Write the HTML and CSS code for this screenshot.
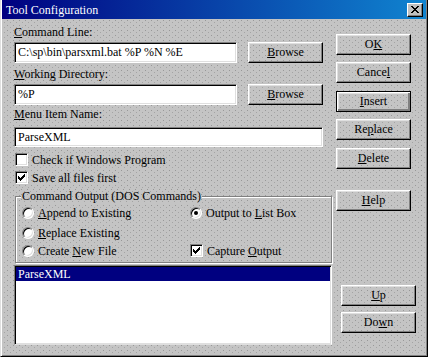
FILE: index.html
```html
<!DOCTYPE html>
<html>
<head>
<meta charset="utf-8">
<title>Tool Configuration</title>
<link rel="stylesheet" href="styles.css">
</head>
<body>
<div class="window dots">
  <div class="titlebar">
    <span class="title">Tool Configuration</span>
    <span class="close">
      <svg width="8" height="7" viewBox="0 0 8 7" shape-rendering="crispEdges">
        <rect x="0" y="0" width="2" height="1"/><rect x="6" y="0" width="2" height="1"/>
        <rect x="1" y="1" width="2" height="1"/><rect x="5" y="1" width="2" height="1"/>
        <rect x="2" y="2" width="4" height="1"/>
        <rect x="3" y="3" width="2" height="1"/>
        <rect x="2" y="4" width="4" height="1"/>
        <rect x="1" y="5" width="2" height="1"/><rect x="5" y="5" width="2" height="1"/>
        <rect x="0" y="6" width="2" height="1"/><rect x="6" y="6" width="2" height="1"/>
      </svg>
    </span>
  </div>
  <div class="body">
    <div class="left">
      <div class="lbl lbl-cmd"><u>C</u>ommand Line:</div>
      <div class="row row-cmd">
        <div class="field field-short">C:\sp\bin\parsxml.bat %P %N %E</div>
        <div class="btn"><span><u>B</u>rowse</span></div>
      </div>
      <div class="lbl lbl-dir"><u>W</u>orking Directory:</div>
      <div class="row row-dir">
        <div class="field field-short">%P</div>
        <div class="btn"><span><u>B</u>rowse</span></div>
      </div>
      <div class="lbl lbl-menu"><u>M</u>enu Item Name:</div>
      <div class="field field-long">ParseXML</div>
      <div class="check check-1">
        <span class="box"></span><span>Check if Windows Program</span>
      </div>
      <div class="check check-2">
        <span class="box"><svg class="tick" width="7" height="7" viewBox="0 0 7 7" shape-rendering="crispEdges">
          <rect x="6" y="0" width="1" height="1"/><rect x="5" y="1" width="2" height="1"/>
          <rect x="0" y="2" width="1" height="1"/><rect x="4" y="2" width="3" height="1"/>
          <rect x="0" y="3" width="2" height="1"/><rect x="3" y="3" width="3" height="1"/>
          <rect x="0" y="4" width="5" height="1"/><rect x="1" y="5" width="3" height="1"/>
          <rect x="2" y="6" width="1" height="1"/></svg></span><span>Save all files first</span>
      </div>
      <div class="group">
        <div class="legend dots">Command Output (DOS Commands)</div>
        <div class="opts">
          <div class="opt"><span class="radio"></span><span><u>A</u>ppend to Existing</span></div>
          <div class="opt"><span class="radio on"></span><span>Output to <u>L</u>ist Box</span></div>
          <div class="opt"><span class="radio"></span><span><u>R</u>eplace Existing</span></div>
          <div class="opt"></div>
          <div class="opt"><span class="radio"></span><span>Create <u>N</u>ew File</span></div>
          <div class="opt"><span class="box"><svg class="tick" width="7" height="7" viewBox="0 0 7 7" shape-rendering="crispEdges">
            <rect x="6" y="0" width="1" height="1"/><rect x="5" y="1" width="2" height="1"/>
            <rect x="0" y="2" width="1" height="1"/><rect x="4" y="2" width="3" height="1"/>
            <rect x="0" y="3" width="2" height="1"/><rect x="3" y="3" width="3" height="1"/>
            <rect x="0" y="4" width="5" height="1"/><rect x="1" y="5" width="3" height="1"/>
            <rect x="2" y="6" width="1" height="1"/></svg></span><span>Capture <u>O</u>utput</span></div>
        </div>
      </div>
      <div class="list">
        <div class="item sel">ParseXML</div>
      </div>
    </div>
    <div class="right">
      <div class="btn b-ok"><span>O<u>K</u></span></div>
      <div class="btn b-cancel"><span>Cance<u>l</u></span></div>
      <div class="btn default b-insert"><span><u>I</u>nsert</span></div>
      <div class="btn b-replace"><span>Re<u>p</u>lace</span></div>
      <div class="btn b-delete"><span><u>D</u>elete</span></div>
      <div class="btn b-help"><span><u>H</u>elp</span></div>
      <div class="btn b-up"><span><u>U</u>p</span></div>
      <div class="btn b-down"><span>Do<u>w</u>n</span></div>
    </div>
  </div>
</div>
</body>
</html>
```
FILE: styles.css
```css
* { box-sizing: border-box; }
html, body { margin: 0; padding: 0; }
body {
  width: 428px;
  height: 357px;
  overflow: hidden;
  font-family: "Liberation Serif", "Times New Roman", serif;
  font-size: 12px;
  color: #000;
  background: #c0c0c0;
}
u { text-decoration: underline; text-underline-offset: 1px; }

.dots {
  background-color: #c4c4c4;
  background-image:
    conic-gradient(from 270deg at 1px 1px, #989898 25%, transparent 0),
    conic-gradient(from 270deg at 1px 1px, #a4a4a4 25%, transparent 0);
  background-size: 6px 5px, 6px 5px;
  background-position: 0 0, 3px 2px;
}

.window {
  width: 428px;
  height: 357px;
  border-left: 1px solid #dfdfdf;
  border-right: 1px solid #000;
  border-bottom: 1px solid #000;
  box-shadow: inset 1px 0 #fff, inset -1px -1px #808080;
  padding: 0 1px 2px 1px;
  display: flex;
  flex-direction: column;
}

.titlebar {
  height: 19px;
  flex: none;
  display: flex;
  align-items: center;
  justify-content: space-between;
  padding: 0 3px 0 4px;
  background: linear-gradient(90deg, #000080 0%, #1084d0 100%);
}
.title {
  color: #fff;
  font-size: 12px;
  line-height: 14px;
}
.close {
  width: 16px;
  height: 14px;
  display: flex;
  align-items: center;
  justify-content: center;
  background: #c0c0c0;
  border-top: 1px solid #fff;
  border-left: 1px solid #fff;
  border-right: 1px solid #000;
  border-bottom: 1px solid #000;
  box-shadow: inset -1px -1px #808080;
  padding: 0 1px 1px 0;
}
.close svg { fill: #000; display: block; }

.body {
  flex: 1;
  display: flex;
  padding: 6px 0 0 12px;
}
.left {
  width: 318px;
  display: flex;
  flex-direction: column;
}
.right {
  width: 84px;
  margin-left: 4px;
  padding-top: 9px;
  display: flex;
  flex-direction: column;
}

.lbl {
  height: 14px;
  line-height: 14px;
  white-space: nowrap;
}
.lbl-dir { margin-top: 4px; }
.lbl-menu { margin-top: 2px; }

.row {
  display: flex;
  gap: 11px;
  margin-top: 3px;
}

.field {
  height: 21px;
  background: #fff;
  border-top: 1px solid #808080;
  border-left: 1px solid #808080;
  border-right: 1px solid #fff;
  border-bottom: 1px solid #fff;
  box-shadow: inset 1px 1px #000, inset -1px -1px #dfdfdf;
  padding: 0 3px;
  line-height: 19px;
  white-space: nowrap;
  overflow: hidden;
}
.field-short { width: 223px; }
.field-long { width: 309px; height: 20px; line-height: 18px; margin-top: 6px; }

.btn {
  width: 75px;
  height: 21px;
  flex: none;
  display: flex;
  align-items: center;
  justify-content: center;
  border-top: 1px solid #fff;
  border-left: 1px solid #fff;
  border-right: 1px solid #000;
  border-bottom: 1px solid #000;
  box-shadow: inset -1px -1px #808080, inset 1px 1px #dfdfdf;
  line-height: 14px;
  white-space: nowrap;
}
.btn span { padding-bottom: 1px; }
.btn.default {
  border: 1px solid #000;
  box-shadow: inset 1px 1px #fff, inset -1px -1px #808080, inset -2px -2px #808080, inset 2px 2px #dfdfdf;
}
.b-cancel { margin-top: 7px; }
.b-insert { margin-top: 8px; }
.b-replace { margin-top: 7px; }
.b-delete { margin-top: 8px; }
.b-help { margin-top: 21px; }
.b-up { margin-top: 74px; margin-left: 5px; }
.b-down { margin-top: 6px; margin-left: 5px; }

.check {
  display: flex;
  align-items: center;
  gap: 4px;
  height: 13px;
  padding-left: 1px;
  line-height: 14px;
  white-space: nowrap;
}
.check-1 { margin-top: 6px; }
.check-2 { margin-top: 5px; }

.box {
  width: 13px;
  height: 13px;
  flex: none;
  background: #fff;
  border-top: 1px solid #808080;
  border-left: 1px solid #808080;
  border-right: 1px solid #fff;
  border-bottom: 1px solid #fff;
  box-shadow: inset 1px 1px #000, inset -1px -1px #dfdfdf;
  display: flex;
  align-items: center;
  justify-content: center;
}
.tick { display: block; fill: #000; }

.radio {
  width: 12px;
  height: 12px;
  flex: none;
  border-radius: 50%;
  background: #fff;
  border-top: 1px solid #808080;
  border-left: 1px solid #808080;
  border-right: 1px solid #fff;
  border-bottom: 1px solid #fff;
  box-shadow: inset 1px 1px #000, inset -1px -1px #dfdfdf;
  display: flex;
  align-items: center;
  justify-content: center;
}
.radio.on::after {
  content: "";
  width: 4px;
  height: 4px;
  border-radius: 50%;
  background: #000;
}

.group {
  margin-top: 12px;
  margin-left: 1px;
  width: 317px;
  height: 67px;
  border: 1px solid #808080;
  box-shadow: inset 1px 1px #fff, 1px 1px #fff;
  display: flex;
  flex-direction: column;
}
.legend {
  display: block;
  align-self: flex-start;
  margin: -8px 0 0 5px;
  padding: 0 1px;
  height: 14px;
  line-height: 14px;
  white-space: nowrap;
}
.opts {
  display: grid;
  grid-template-columns: 168px 1fr;
  grid-template-rows: 20px 18px 13px;
  padding-left: 6px;
  margin-top: 3px;
}
.opt {
  display: flex;
  align-items: center;
  gap: 4px;
  height: 13px;
  line-height: 14px;
  white-space: nowrap;
}

.list {
  margin-top: 2px;
  width: 318px;
  height: 80px;
  background: #fff;
  border-top: 1px solid #808080;
  border-left: 1px solid #808080;
  border-right: 1px solid #fff;
  border-bottom: 1px solid #dfdfdf;
  box-shadow: inset 1px 1px #000, inset -1px -1px #dfdfdf;
  padding: 1px 1px;
}
.item {
  height: 14px;
  line-height: 14px;
  padding-left: 2px;
  white-space: nowrap;
}
.item.sel {
  background: #000080;
  color: #fff;
}
```
